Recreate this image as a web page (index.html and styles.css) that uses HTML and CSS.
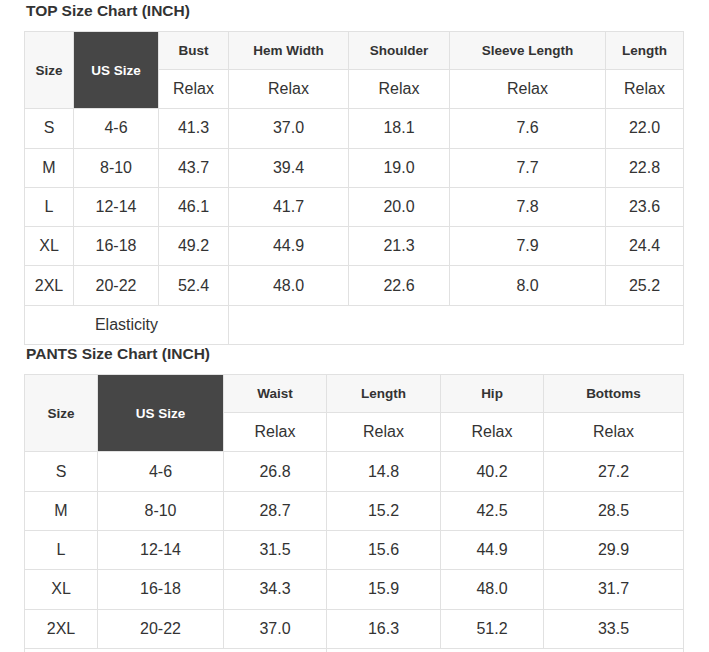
FILE: index.html
```html
<!DOCTYPE html>
<html lang="en">
<head>
<meta charset="utf-8">
<title>Size Chart</title>
<link rel="stylesheet" href="styles.css">
</head>
<body>
<div class="page">
  <h2 class="chart-title">TOP Size Chart (INCH)</h2>
  <table class="chart">
    <colgroup>
      <col class="w49"><col class="w85"><col class="w70"><col class="w120"><col class="w101"><col class="w156"><col class="w78">
    </colgroup>
    <tr class="head-row">
      <th rowspan="2" class="hd">Size</th>
      <th rowspan="2" class="us">US Size</th>
      <th class="hd">Bust</th>
      <th class="hd">Hem Width</th>
      <th class="hd">Shoulder</th>
      <th class="hd">Sleeve Length</th>
      <th class="hd">Length</th>
    </tr>
    <tr class="row">
      <td>Relax</td><td>Relax</td><td>Relax</td><td>Relax</td><td>Relax</td>
    </tr>
    <tr class="row"><td>S</td><td>4-6</td><td>41.3</td><td>37.0</td><td>18.1</td><td>7.6</td><td>22.0</td></tr>
    <tr class="row"><td>M</td><td>8-10</td><td>43.7</td><td>39.4</td><td>19.0</td><td>7.7</td><td>22.8</td></tr>
    <tr class="row"><td>L</td><td>12-14</td><td>46.1</td><td>41.7</td><td>20.0</td><td>7.8</td><td>23.6</td></tr>
    <tr class="row"><td>XL</td><td>16-18</td><td>49.2</td><td>44.9</td><td>21.3</td><td>7.9</td><td>24.4</td></tr>
    <tr class="row"><td>2XL</td><td>20-22</td><td>52.4</td><td>48.0</td><td>22.6</td><td>8.0</td><td>25.2</td></tr>
    <tr class="row"><td colspan="3">Elasticity</td><td colspan="4"></td></tr>
  </table>

  <h2 class="chart-title">PANTS Size Chart (INCH)</h2>
  <table class="chart">
    <colgroup>
      <col class="w73"><col class="w126"><col class="w103"><col class="w114"><col class="w103"><col class="w140">
    </colgroup>
    <tr class="head-row">
      <th rowspan="2" class="hd">Size</th>
      <th rowspan="2" class="us">US Size</th>
      <th class="hd">Waist</th>
      <th class="hd">Length</th>
      <th class="hd">Hip</th>
      <th class="hd">Bottoms</th>
    </tr>
    <tr class="row">
      <td>Relax</td><td>Relax</td><td>Relax</td><td>Relax</td>
    </tr>
    <tr class="row"><td>S</td><td>4-6</td><td>26.8</td><td>14.8</td><td>40.2</td><td>27.2</td></tr>
    <tr class="row"><td>M</td><td>8-10</td><td>28.7</td><td>15.2</td><td>42.5</td><td>28.5</td></tr>
    <tr class="row"><td>L</td><td>12-14</td><td>31.5</td><td>15.6</td><td>44.9</td><td>29.9</td></tr>
    <tr class="row"><td>XL</td><td>16-18</td><td>34.3</td><td>15.9</td><td>48.0</td><td>31.7</td></tr>
    <tr class="row"><td>2XL</td><td>20-22</td><td>37.0</td><td>16.3</td><td>51.2</td><td>33.5</td></tr>
    <tr class="row"><td colspan="3">Elasticity</td><td colspan="3"></td></tr>
  </table>
</div>
</body>
</html>
```

FILE: styles.css
```css
html, body {
  margin: 0;
  padding: 0;
  background: #ffffff;
}

.page {
  padding: 2px 0 0 24px;
  font-family: "Liberation Sans", Arial, sans-serif;
  color: #333333;
}

.chart-title {
  margin: 0 0 11px 0;
  padding-left: 2px;
  font-size: 15.5px;
  line-height: 18px;
  font-weight: bold;
  color: #333333;
}

.chart {
  border-collapse: collapse;
  table-layout: fixed;
  width: 660px;
}

.chart th,
.chart td {
  border: 1px solid #e1e1e1;
  padding: 0;
  text-align: center;
  vertical-align: middle;
}

.chart td {
  font-size: 16px;
  font-weight: normal;
  color: #333333;
}

.chart th {
  font-size: 13.5px;
  font-weight: bold;
}

.chart .hd {
  background: #f7f7f7;
  color: #333333;
}

.chart .us {
  background: #464646;
  color: #ffffff;
}

.head-row {
  height: 38px;
}

.row {
  height: 39.3px;
}

.w49 { width: 49px; }
.w85 { width: 85px; }
.w70 { width: 70px; }
.w120 { width: 120px; }
.w101 { width: 101px; }
.w156 { width: 156px; }
.w78 { width: 78px; }
.w73 { width: 73px; }
.w126 { width: 126px; }
.w103 { width: 103px; }
.w114 { width: 114px; }
.w140 { width: 140px; }
```
